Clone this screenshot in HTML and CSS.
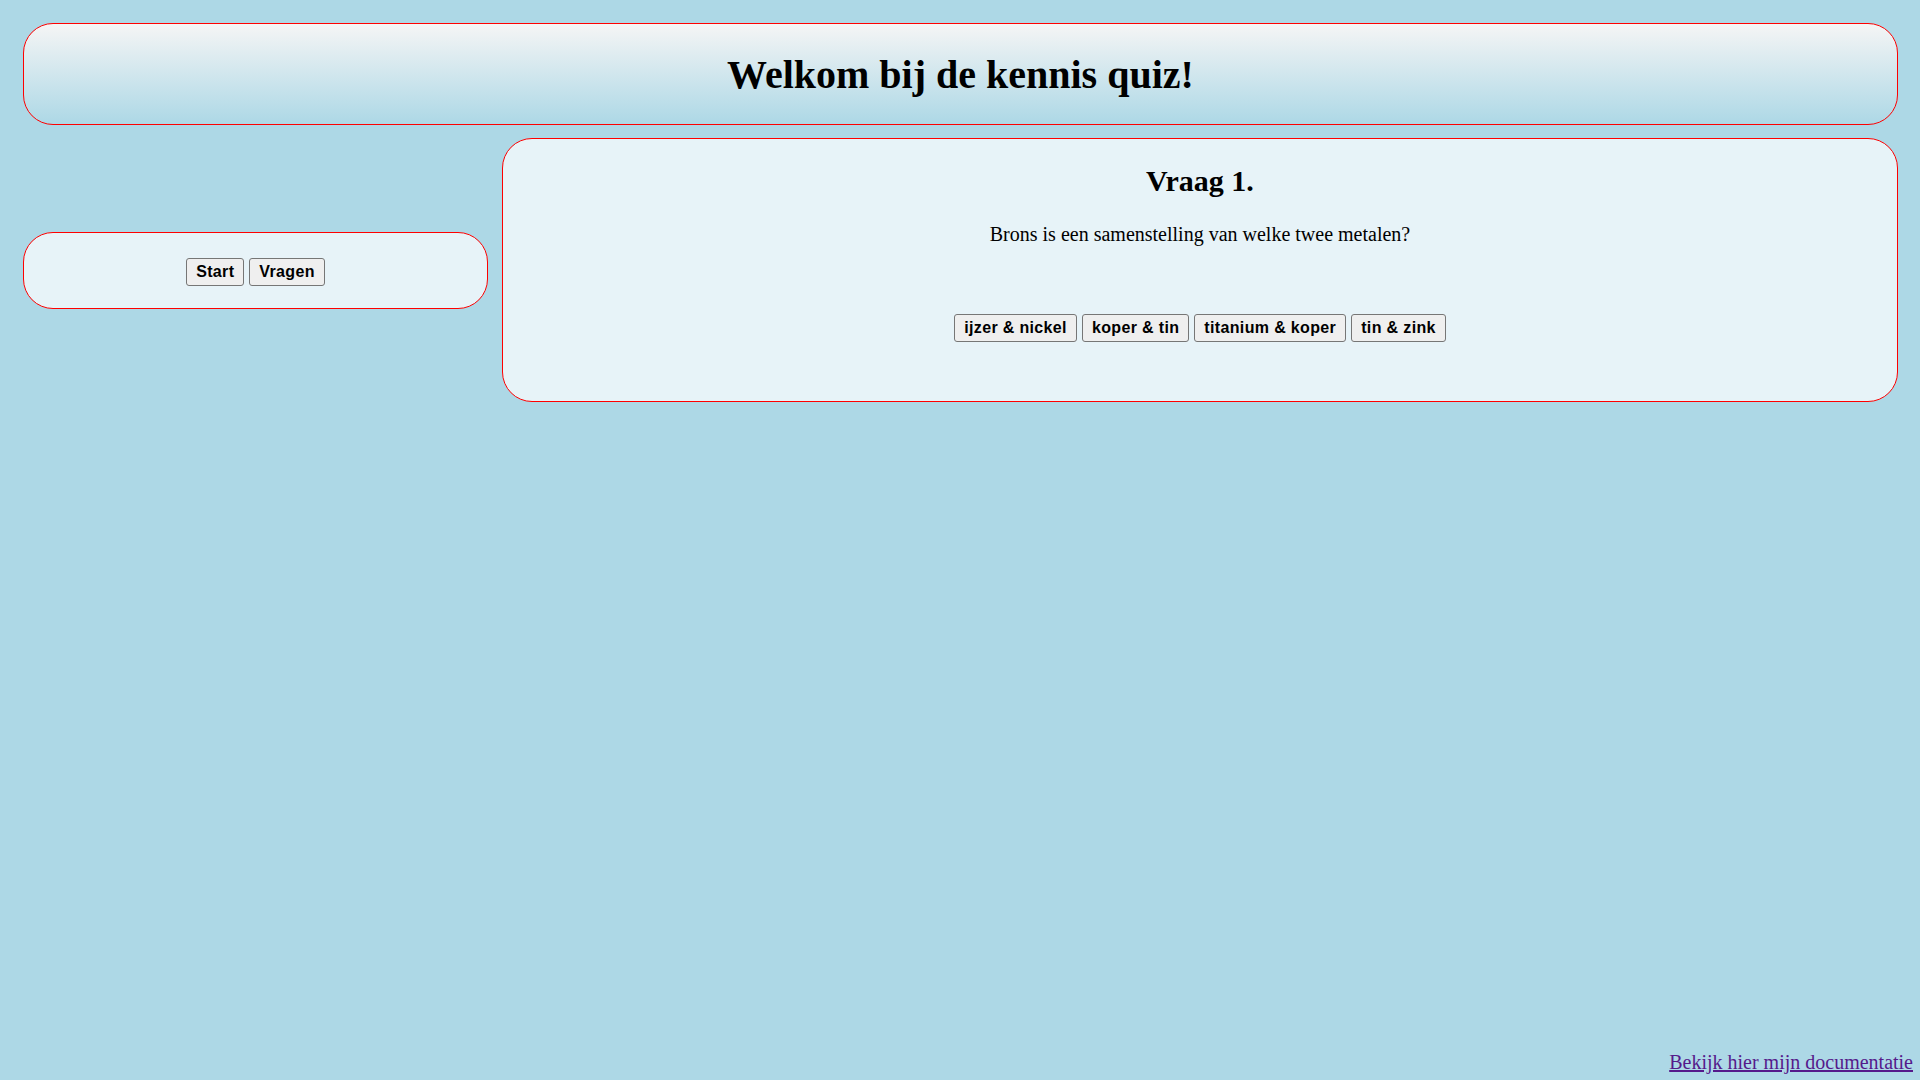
FILE: index.html
```html
<!DOCTYPE html>
<html lang="nl">
<head>
<meta charset="utf-8">
<title>Kennis quiz</title>
<link rel="stylesheet" href="styles.css">
</head>
<body>
  <div class="page">
    <header class="banner">
      <h1 class="banner-title">Welkom bij de kennis quiz!</h1>
    </header>
    <div class="layout">
      <aside class="sidebar">
        <nav class="nav-buttons">
          <button class="btn" type="button">Start</button>
          <button class="btn" type="button">Vragen</button>
        </nav>
      </aside>
      <main class="quiz">
        <h2 class="quiz-title">Vraag 1.</h2>
        <p class="quiz-question">Brons is een samenstelling van welke twee metalen?</p>
        <div class="answers">
          <button class="btn" type="button">ijzer &amp; nickel</button>
          <button class="btn" type="button">koper &amp; tin</button>
          <button class="btn" type="button">titanium &amp; koper</button>
          <button class="btn" type="button">tin &amp; zink</button>
        </div>
      </main>
    </div>
  </div>
  <footer class="footer">
    <a class="doc-link" href="#">Bekijk hier mijn documentatie</a>
  </footer>
</body>
</html>
```

FILE: styles.css
```css
html, body {
  margin: 0;
  padding: 0;
}

body {
  background: #add8e6;
  font-family: "Liberation Serif", "Times New Roman", serif;
  color: #000;
  min-height: 100vh;
  display: flex;
  flex-direction: column;
  box-sizing: border-box;
}

.page {
  padding: 23px 22px 0 23px;
}

.banner {
  border: 1px solid #ff0000;
  border-radius: 30px;
  background: linear-gradient(#f5f5f5, #add8e6);
  padding: 27px 0 25px;
  text-align: center;
}

.banner-title {
  margin: 0;
  font-size: 40px;
  line-height: 48px;
  font-weight: bold;
}

.layout {
  display: grid;
  grid-template-columns: 465px 1fr;
  column-gap: 14px;
  margin-top: 13px;
  align-items: start;
}

.sidebar {
  margin-top: 94px;
  border: 1px solid #ff0000;
  border-radius: 30px;
  background: #e7f3f8;
  padding: 25px 0 22px;
}

.nav-buttons,
.answers {
  display: flex;
  justify-content: center;
  gap: 5px;
}

.btn {
  font-family: "Liberation Sans", Arial, sans-serif;
  font-weight: bold;
  font-size: 16px;
  line-height: 18px;
  letter-spacing: 0.35px;
  padding: 4px 9px;
  border: 1px solid #767676;
  border-radius: 3px;
  background: #efefef;
  color: #000;
  margin: 0;
}

.quiz {
  border: 1px solid #ff0000;
  border-radius: 30px;
  background: #e7f3f8;
  padding: 24px 0 59px;
  text-align: center;
}

.quiz-title {
  margin: 0;
  font-size: 30px;
  line-height: 36px;
  font-weight: bold;
}

.quiz-question {
  margin: 23px 0 0;
  font-size: 20px;
  line-height: 24px;
}

.answers {
  margin-top: 68px;
}

.footer {
  margin-top: auto;
  text-align: right;
  padding: 0 7px 6px 0;
}

.doc-link {
  font-size: 20px;
  line-height: 23px;
  color: #551a8b;
}
```
